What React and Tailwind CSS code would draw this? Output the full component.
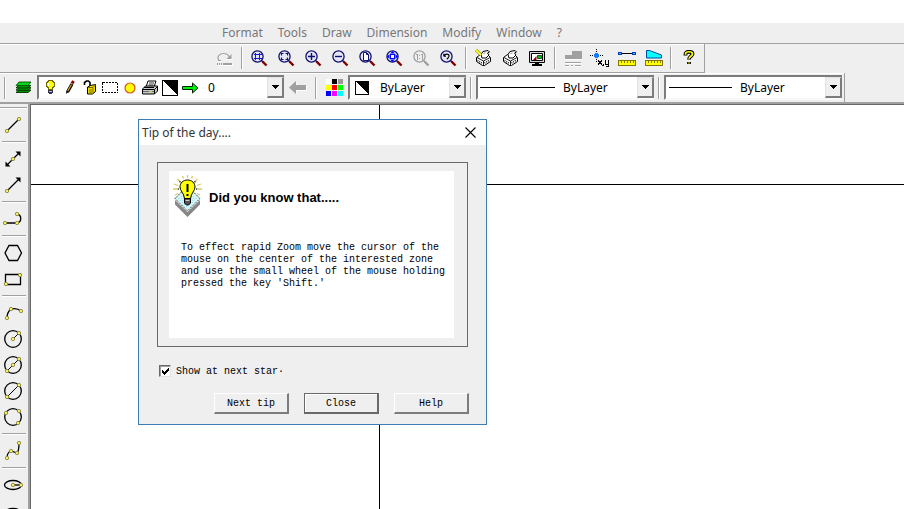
import React from "react";

const uiFont = 'font-["Noto_Sans",sans-serif]';
const monoFont = 'font-["Liberation_Mono",monospace]';

function Svg({ w, h, children, smooth = false }) {
  return (
    <svg
      width={w}
      height={h}
      viewBox={`0 0 ${w} ${h}`}
      fill="none"
      shapeRendering={smooth ? "auto" : "crispEdges"}
      className="block shrink-0"
      aria-hidden="true"
    >
      {children}
    </svg>
  );
}

/* ---------- zoom icons ---------- */

function Lens({ grey = false, children }) {
  return (
    <Svg w={17} h={17} smooth>
      <circle cx="6.5" cy="6.5" r="5.6" fill={grey ? "#efefef" : "#e4e6f4"} stroke={grey ? "#a0a0a0" : "#101070"} strokeWidth="1.3" />
      <path d="M10.5 10.5l2 2" stroke={grey ? "#a0a0a0" : "#101070"} strokeWidth="1.5" />
      <path d="M11.5 11.5l4 4" stroke={grey ? "#a0a0a0" : "#800000"} strokeWidth="2.4" />
      {children}
    </Svg>
  );
}

const ZoomRect = () => (
  <Lens>
    <path d="M4.5 3v7M8.5 3v7M3 4.5h8M2.5 8.5h8" stroke="#1818d0" shapeRendering="crispEdges" />
  </Lens>
);
const ZoomWindow = () => (
  <Lens>
    <path d="M3.5 5.5v-2h2M7.5 3.5h2v2M9.5 7.5v2h-2M5.5 9.5h-2v-2" stroke="#101070" strokeWidth="1.1" />
  </Lens>
);
const ZoomIn = () => (
  <Lens>
    <path d="M3 6.5h7M6.5 3v7" stroke="#101070" strokeWidth="1.4" />
  </Lens>
);
const ZoomOut = () => (
  <Lens>
    <path d="M3 6.5h7" stroke="#101070" strokeWidth="1.4" />
  </Lens>
);
const ZoomPage = () => (
  <Lens>
    <path d="M4.5 2.5h3l2 2v6h-5zM7.5 2.5v2h2" fill="#fff" stroke="#101070" />
  </Lens>
);
const ZoomExtents = () => (
  <Lens>
    <path d="M6.5 1l2.5 2.5H4zM6.5 12L9 9.5H4zM1 6.5L3.5 4v5zM12 6.5L9.500 4v5z" fill="#0000ff" />
    <rect x="4.5" y="4.5" width="4" height="4" fill="#fff" stroke="#0000ff" />
  </Lens>
);
const ZoomOne = () => (
  <Lens grey>
    <path d="M3 4.5h1.500v5M8 4.5h1.5v5M6 5h1M6 8h1" stroke="#a0a0a0" shapeRendering="crispEdges" />
  </Lens>
);
const ZoomPrevious = () => (
  <Lens>
    <path d="M3.8 6V3.8M3.6 6.2H6M4 6c1-2.5 5-2.5 5 0 0 1.5-1 2-2.200 3.2" stroke="#000" strokeWidth="1.1" />
  </Lens>
);

/* ---------- upper toolbar icons ---------- */

const Redo = () => (
  <Svg w={17} h={15} smooth>
    <path d="M3 10.5h3M3.5 10C.5 5 5.5 3 8.5 3.5c3 0 4.5 1.5 5 4M10 8.5h6V4" stroke="#fff" />
    <path d="M2 9.5h3M3 9.5C0 5 4.5 2.5 7.5 2.5c3.5 0 5 1.5 6 4" stroke="#a0a0a0" strokeWidth="1.2" />
    <path d="M15.5 3v5h-5z" fill="#a0a0a0" />
    <path d="M1 12h1v2H1zM3 12h1v2H3zM5 12h1v2H5zM7 12h9v2H7z" fill="#a0a0a0" />
    <path d="M2 14.5h14.5v-2" stroke="#fff" />
  </Svg>
);

function PrinterShape() {
  return (
    <>
      <path d="M1.5 8.500l4-3h7l3 3v4l-6 4h-2l-6-4z" fill="#fff" stroke="#000" />
      <path d="M2 8.5l6.500 3.5 6.5-3.5M8.500 12v4" stroke="#000" strokeWidth=".9" />
      <path d="M2.5 11.5l5 3M9.500 14l5-3" stroke="#333" strokeDasharray="1 1" strokeWidth="1.6" />
      <path d="M6 5.5l2-3 5-1 1.5 1.500-2 1 1.5 2-3 3H7z" fill="#fff" stroke="#000" />
      <path d="M8.5 4.5l2-.5" stroke="#777" strokeWidth=".8" />
    </>
  );
}
const PrintWizard = () => (
  <Svg w={17} h={18} smooth>
    <PrinterShape />
    <path d="M1 1l5 5" stroke="#777700" strokeWidth="3" />
    <path d="M1 1l5 5" stroke="#ffff30" strokeWidth="1.8" />
  </Svg>
);
const Print = () => (
  <Svg w={17} h={18} smooth>
    <PrinterShape />
  </Svg>
);
const Monitor = () => (
  <Svg w={17} h={15} smooth>
    <path d="M.5 .5h15v11H.5z" fill="#d8d8d8" stroke="#000" />
    <path d="M2.5 2.500h11v7h-11z" fill="#fff" stroke="#000" />
    <path d="M4 9l3.5-4v4z" fill="#900000" />
    <path d="M8.5 4.5h4v3h-4z" fill="#00c020" stroke="#003000" strokeWidth=".8" />
    <path d="M6 12h4v1H6zM3 13h10v2H3z" fill="#000" />
  </Svg>
);
const LineWeights = () => (
  <Svg w={18} h={17}>
    <path d="M8 1h10v8H1V5h7z" fill="#a0a0a0" />
    <path d="M1 12.5h16M1 15.5h4M7 15.5h2M11 15.5h6" stroke="#a0a0a0" />
    <path d="M1 13.5h16M1 16.5h4M7 16.5h2M11 16.5h6M1 9.5h17" stroke="#fff" />
  </Svg>
);
const Coordinates = () => (
  <Svg w={19} h={18}>
    <path d="M6.5 0v1M6.5 2v1M6.5 10v1M6.5 12v1M0 6.5h1M2 6.5h1M10 6.5h1M12 6.5h1" stroke="#000" />
    <path d="M5 4h3v1h1v3H8v1H5V8H4V5h1z" fill="#1080ff" />
    <path d="M8.5 11v1l3 3v1M11.5 11v1l-3 3v1M13.5 15v1l-1 1M15.5 11v4h3M18.5 11v6h-3" stroke="#000" />
  </Svg>
);
function RulerStrip() {
  return (
    <>
      <path d="M.5 10.5h17v5H.5z" fill="#ffff00" stroke="#807800" />
      <path d="M3.5 11v2M6.5 11v2M9.5 11v2M12.5 11v2M15.5 11v2" stroke="#807800" />
    </>
  );
}
const Distance = () => (
  <Svg w={18} h={16}>
    <path d="M3 3.5h12" stroke="#000" />
    <path d="M.5 2.5h3v2h-3zM14.5 2.5h3v2h-3z" fill="#50b0ff" stroke="#0040c0" />
    <RulerStrip />
  </Svg>
);
const Area = () => (
  <Svg w={18} h={16} smooth>
    <path d="M1.5 .5h3l12 4.5v3h-15z" fill="#00ffff" stroke="#0048a0" />
    <g shapeRendering="crispEdges">
      <RulerStrip />
    </g>
  </Svg>
);
const HelpMark = () => (
  <Svg w={12} h={16} smooth>
    <path d="M2.5 5.5V4c0-3 7-3 7 0 0 2-3.5 2.5-3.5 5.5M6 12v2" stroke="#000" strokeWidth="3.8" />
    <path d="M2.5 4.8V4c0-3 7-3 7 0 0 2-3.5 2.5-3.5 4.8M6 12.6v1" stroke="#ffff00" strokeWidth="1.7" />
  </Svg>
);

/* ---------- layer toolbar icons ---------- */

const Layers = () => (
  <Svg w={17} h={13} smooth>
    <path d="M1 11.5L4 9h12l-3 2.5z" fill="#009000" stroke="#003000" strokeWidth=".9" />
    <path d="M1 9.2l3-2.5h12l-3 2.500z" fill="#00a000" stroke="#003000" strokeWidth=".9" />
    <path d="M1 6.900l3-2.5h12l-3 2.500z" fill="#00a000" stroke="#003000" strokeWidth=".9" />
    <path d="M1 4.6L4 1h12l-3 3.6z" fill="#00d818" stroke="#005000" strokeWidth=".9" />
  </Svg>
);
const Bulb = () => (
  <Svg w={11} h={15}>
    <path d="M3.5 .5h4v1h1v1h1v4h-1v1h-1v2h-4v-2h-1v-1h-1v-4h1v-1h1z" fill="#ffff00" stroke="#706800" />
    <path d="M3 10h5v3H7v1H4v-1H3z" fill="#303050" />
    <path d="M4 11.5h3" stroke="#bbb" />
    <path d="M3.5 3v3" stroke="#fff" />
  </Svg>
);
const Pencil = () => (
  <Svg w={11} h={15} smooth>
    <path d="M2.5 12l4.5-8" stroke="#000" strokeWidth="3.2" />
    <path d="M2.8 11L6.5 4.5" stroke="#c89818" strokeWidth="1.4" />
    <path d="M7 3.5l1.5-2.5" stroke="#900000" strokeWidth="3" />
    <path d="M.8 14l.7-3 2 1z" fill="#000" />
  </Svg>
);
const Lock = () => (
  <Svg w={14} h={15} smooth>
    <path d="M1.5 5V2.5l2-1.500h2l1.5 1.500V7" stroke="#000" strokeWidth="1.6" />
    <path d="M4.5 7l3-1.5 5-1v7l-3 2.5h-5z" fill="#f0e000" stroke="#000" />
    <path d="M5 7.5h5l2.5-2.5M10 7.5V14M6 10h3M6 12h3" stroke="#806800" />
  </Svg>
);
const DashedBox = () => (
  <Svg w={16} h={11}>
    <path d="M.5 .5h15v10H.5z" fill="#fff" stroke="#000" strokeDasharray="2 1" />
  </Svg>
);
const Sun = () => (
  <Svg w={12} h={12} smooth>
    <circle cx="6" cy="6" r="5" fill="#ffff00" stroke="#d85020" strokeWidth="1.2" />
  </Svg>
);
const Printer = () => (
  <Svg w={17} h={15} smooth>
    <path d="M4 7l2-6h8l-2 6z" fill="#fff" stroke="#000" />
    <path d="M7 3h5M6.5 5h5" stroke="#000" strokeWidth=".8" />
    <path d="M.5 9l3-3h12v5l-3 3H.5z" fill="#c8c8c8" stroke="#000" />
    <path d="M.5 9.5h12l3-3M12.5 9.5V14M2 7.5h10" stroke="#000" />
    <path d="M1 11.5h11" stroke="#707070" />
    <path d="M7 11.5h3" stroke="#e0d000" />
  </Svg>
);
const HalfSquare = ({ size }) => (
  <Svg w={size} h={size}>
    <path d={`M.5 .5h${size - 1}v${size - 1}H.5z`} fill="#fff" stroke="#000" />
    <path d={`M1 1h${size - 1}v${size - 1}z`} fill="#000" />
  </Svg>
);
const GreenArrow = () => (
  <Svg w={17} h={12} smooth>
    <path d="M.5 4.500h10v-3.500l5.500 5-5.500 5V7.5H.5z" fill="#00f000" stroke="#002800" />
  </Svg>
);
const BackArrow = () => (
  <Svg w={18} h={13} smooth>
    <path d="M8 2v3h10v5H8v3L2 7z" fill="#fff" />
    <path d="M7 0v4h10v5H7v4L0 6.5z" fill="#a0a0a0" />
  </Svg>
);
const Palette = () => (
  <Svg w={17} h={17}>
    <path d="M0 0h5v5H0z" fill="#fff" />
    <path d="M6 0h5v5H6z" fill="#000" />
    <path d="M12 0h5v5h-5z" fill="#999" />
    <path d="M0 6h5v5H0z" fill="#ffff00" />
    <path d="M6 6h5v5H6z" fill="#ff0000" />
    <path d="M12 6h5v5h-5z" fill="#00ff00" />
    <path d="M0 12h5v5H0z" fill="#0000ff" />
    <path d="M6 12h5v5H6z" fill="#ff00ff" />
    <path d="M12 12h5v5h-5z" fill="#00ffff" />
  </Svg>
);

/* ---------- drawing tools ---------- */

function Tool({ dots = [], children }) {
  return (
    <Svg w={20} h={20} smooth>
      <g stroke="#000" strokeWidth="1.3">{children}</g>
      {dots.map(([x, y]) => (
        <circle key={`${x}-${y}`} cx={x} cy={y} r="1.7" fill="#f4f060" stroke="#8a8440" strokeWidth=".9" />
      ))}
    </Svg>
  );
}

const drawTools = [
  [["Line", <Tool dots={[[4, 16], [16, 4]]}><path d="M4 16L16 4" /></Tool>]],
  [
    [
      "Construction line",
      <Tool dots={[[10, 10]]}>
        <path d="M4 16L16 4" />
        <path d="M2.5 17.5v-5l5 5zM17.5 2.5h-5l5 5z" fill="#000" stroke="none" />
      </Tool>,
    ],
    [
      "Ray",
      <Tool dots={[[4, 16]]}>
        <path d="M4 16L16 4" />
        <path d="M17.5 2.5h-5l5 5z" fill="#000" stroke="none" />
      </Tool>,
    ],
  ],
  [["Polyline", <Tool dots={[[2, 14], [14, 14], [14, 5]]}><path d="M2 14h12c5-1 5-8 0-9" /></Tool>]],
  [
    ["Polygon", <Tool><path d="M6 2.5h8.5l4 7.500-4 7.5H6L2 10z" /></Tool>],
    ["Rectangle", <Tool dots={[[3, 15], [17, 6]]}><path d="M2.5 5.5h15v10h-15z" /></Tool>],
  ],
  [
    ["Arc", <Tool dots={[[4, 15], [8, 6], [18, 8]]}><path d="M4 15c0-4 1.5-7 4-9 4-1 7-.5 10 2" /></Tool>],
    ["Circle radius", <Tool dots={[[10, 10], [16, 4]]}><circle cx="10" cy="10" r="8.3" /><path d="M10 10l6-6" strokeWidth="1" /></Tool>],
    ["Circle diameter", <Tool dots={[[4, 16], [10, 10], [16, 4]]}><circle cx="10" cy="10" r="8.3" /><path d="M4 16L16 4" strokeWidth="1" /></Tool>],
    ["Circle two points", <Tool dots={[[4, 16], [16, 4]]}><circle cx="10" cy="10" r="8.3" /><path d="M4 16L16 4" strokeWidth="1" /></Tool>],
    ["Circle three points", <Tool dots={[[3, 6], [16, 4], [15, 16]]}><circle cx="10" cy="10" r="8.3" /></Tool>],
  ],
  [["Spline", <Tool dots={[[4, 17], [8, 10], [14, 12], [16, 2]]}><path d="M4 17c0-4 1-6 4-7l6 2c2-2 2-6 2-10" /></Tool>]],
  [
    ["Ellipse", <Tool dots={[[10, 10], [18, 10]]}><ellipse cx="10" cy="10" rx="8.5" ry="4.5" /><path d="M10 10h8" /></Tool>],
    ["Ellipse arc", <Tool><ellipse cx="10" cy="12" rx="8.5" ry="4.5" /></Tool>],
  ],
];

/* ---------- dialog icon ---------- */

const TipIcon = () => (
  <Svg w={32} h={44} smooth>
    <path d="M2 25v4.5l12.5 12.5L27 29.5V25L14.500 37z" fill="#868686" />
    <path d="M2 23.5L14.5 11 27 23.5 14.5 36z" fill="#d4f4f8" stroke="#000" strokeWidth=".8" strokeDasharray="1.5 1" />
    <path d="M5 23.5h19M7 25.5h15M9 27.5h11M11 29.5h7M13 31.5h3M8 21.5h13" stroke="#7cdce8" strokeWidth=".8" strokeDasharray="1 1.5" />
    <path d="M14.5 0v3M4.5 4l3 3M24.500 4l-3 3M0 14h5M24 14h5M2 20l3-1.5M27 20l-3-1.5M9.500 1l1 2.5M19.5 1l-1 2.5M1 9l4 1.500M28 9l-4 1.5" stroke="#d8cc60" strokeWidth="1.3" />
    <path d="M6.5 6.2l1 1M22.5 6.2l-1 1M5 14h1M23 14h1" stroke="#333" strokeWidth="1.3" />
    <path d="M14.5 5C10 5 7 8 7 12c0 4 4 6 4.500 11.5h6C18 18 22 16 22 12c0-4-3-7-7.5-7z" fill="#ffff00" stroke="#000" />
    <path d="M14.5 9v8M14.5 19v2" stroke="#000" strokeWidth="2" />
    <path d="M11.500 23.500h6V28l-2 2h-2l-2-2z" fill="#555" stroke="#000" />
    <path d="M12.500 25.500h4" stroke="#ccc" />
  </Svg>
);

/* ---------- controls ---------- */

function IconButton({ label, children, className = "w-[27px]" }) {
  return (
    <button type="button" aria-label={label} className={`flex shrink-0 items-center justify-center ${className}`}>
      {children}
    </button>
  );
}

function Divider({ className = "w-2" }) {
  return (
    <div className={`flex shrink-0 justify-center ${className}`}>
      <div className="h-[22px] border-l border-[#a0a0a0] border-r border-r-white" />
    </div>
  );
}

function Combo({ label, value, className, children }) {
  return (
    <div
      className={`flex h-[25px] shrink-0 items-center border-t-2 border-b-2 border-l-2 border-t-[#7c7c7c] border-l-[#7c7c7c] border-b-[#f8f8f8] bg-white ${className}`}
    >
      {children}
      <select aria-label={label} className={`min-w-0 flex-1 appearance-none bg-transparent ${uiFont} text-xs text-black outline-none`}>
        <option>{value}</option>
      </select>
      <button
        type="button"
        aria-label={`Open ${label}`}
        className="flex h-full w-[17px] shrink-0 items-center justify-center border-r-2 border-b-2 border-l border-t border-t-[#e3e3e3] border-l-[#e3e3e3] border-r-[#7c7c7c] border-b-[#7c7c7c] bg-[#efefef]"
      >
        <Svg w={7} h={4}>
          <path d="M0 0h7v1H6v1H5v1H4v1H3V3H2V2H1V1H0z" fill="#000" />
        </Svg>
      </button>
    </div>
  );
}

function PushButton({ children, isDefault = false }) {
  return (
    <button
      type="button"
      className={`h-[21px] w-[75px] border-t border-l border-r-2 border-b-2 pt-[2px] ${monoFont} text-[10px] leading-3 ${
        isDefault ? "border-[#696969] inset-shadow-[1px_1px_0_#ffffff]" : "border-t-white border-l-white border-r-[#7c7c7c] border-b-[#7c7c7c]"
      } bg-[#efefef] text-black`}
    >
      {children}
    </button>
  );
}

function TipDialog() {
  return (
    <section
      role="dialog"
      aria-label="Tip of the day"
      className="absolute top-[14px] left-[107px] w-[349px] border border-[#3d7fb5] bg-[#efefef]"
    >
      <header className="flex h-[25px] items-center justify-between bg-white pr-[10px] pl-[3px]">
        <h1 className={`${uiFont} text-xs text-[#333]`}>Tip of the day....</h1>
        <button type="button" aria-label="Close dialog">
          <Svg w={11} h={11} smooth>
            <path d="M.5 .5l10 10M10.5 .5l-10 10" stroke="#000" strokeWidth="1.1" />
          </Svg>
        </button>
      </header>
      <div className="pt-[17px] pr-[17px] pb-[10px] pl-[18px]">
        <div className="mr-px border border-[#696969] py-2 pr-[13px] pl-[11px]">
          <div className="h-[167px] bg-white">
            <div className="flex items-start gap-1 pt-1 pl-1">
              <TipIcon />
              <h2 className='pt-[13px] font-["Liberation_Sans",sans-serif] text-[13px] font-bold text-black'>
                Did you know that.....
              </h2>
            </div>
            <p className={`${monoFont} pt-[23px] pl-3 text-[10px] leading-3 whitespace-pre text-black`}>
              {"To effect rapid Zoom move the cursor of the\nmouse on the center of the interested zone\nand use the small wheel of the mouse holding\npressed the key 'Shift.'"}
            </p>
          </div>
        </div>
        <label className="mt-[18px] flex items-start gap-[5px] pl-[2px]">
          <span className="grid size-3 shrink-0">
            <input
              type="checkbox"
              defaultChecked
              className="peer col-start-1 row-start-1 size-3 appearance-none border border-t-[#696969] border-l-[#696969] border-r-[#e3e3e3] border-b-[#e3e3e3] bg-white inset-shadow-[1px_1px_0_#a0a0a0]"
            />
            <span className="pointer-events-none invisible col-start-1 row-start-1 flex items-center justify-center peer-checked:visible">
              <Svg w={7} h={7}>
                <path d="M0 2h1v1h1v1h1V3h1V2h1V1h1V0h1v3H6v1H5v1H4v1H3v1H2V6H1V5H0z" fill="#000" />
              </Svg>
            </span>
          </span>
          <span className={`${monoFont} pt-px text-[10px] leading-3 whitespace-nowrap text-black`}>
            Show at next star·
          </span>
        </label>
        <div className="mt-[15px] flex justify-end gap-[15px]">
          <PushButton>Next tip</PushButton>
          <PushButton isDefault>Close</PushButton>
          <PushButton>Help</PushButton>
        </div>
      </div>
    </section>
  );
}

const menus = ["Format", "Tools", "Draw", "Dimension", "Modify", "Window", "?"];

export default function App() {
  return (
    <div className="flex h-screen flex-col overflow-hidden bg-[#efefef]">
      <div className="h-[23px] shrink-0 bg-white" />

      <nav className={`flex h-5 shrink-0 items-center gap-[15px] pl-[222px] ${uiFont} text-xs text-[#777]`}>
        {menus.map((m) => (
          <button key={m} type="button">
            {m}
          </button>
        ))}
      </nav>

      <div className="flex h-[30px] shrink-0 border-t border-[#a0a0a0]">
        <div className="flex items-center border-r border-b border-[#a0a0a0] pr-[2px] pl-[211px] inset-shadow-[0_1px_0_#ffffff]">
          <IconButton label="Redo"><Redo /></IconButton>
          <Divider />
          <IconButton label="Zoom rectangle"><ZoomRect /></IconButton>
          <IconButton label="Zoom window"><ZoomWindow /></IconButton>
          <IconButton label="Zoom in"><ZoomIn /></IconButton>
          <IconButton label="Zoom out"><ZoomOut /></IconButton>
          <IconButton label="Zoom page"><ZoomPage /></IconButton>
          <IconButton label="Zoom extents"><ZoomExtents /></IconButton>
          <IconButton label="Zoom one to one"><ZoomOne /></IconButton>
          <IconButton label="Zoom previous"><ZoomPrevious /></IconButton>
          <Divider />
          <IconButton label="Print wizard"><PrintWizard /></IconButton>
          <IconButton label="Print"><Print /></IconButton>
          <IconButton label="Display"><Monitor /></IconButton>
          <Divider />
          <IconButton label="Line weights"><LineWeights /></IconButton>
          <IconButton label="Coordinates"><Coordinates /></IconButton>
          <IconButton label="Distance"><Distance /></IconButton>
          <IconButton label="Area"><Area /></IconButton>
          <Divider />
          <IconButton label="Help"><HelpMark /></IconButton>
        </div>
      </div>

      <div className="flex h-[31px] shrink-0 border-b-2 border-[#a0a0a0]">
        <div className="flex items-center border-r border-[#a0a0a0] pr-[2px] inset-shadow-[0_1px_0_#ffffff]">
          <Divider className="w-[9px]" />
          <IconButton label="Layers" className="w-7"><Layers /></IconButton>
          <Combo label="Layer" value="0" className="w-[247px]">
            <div className="mr-2 grid grid-cols-8 items-center justify-items-center pl-px">
              <div className="flex w-5 justify-center"><Bulb /></div>
              <div className="flex w-5 justify-center"><Pencil /></div>
              <div className="flex w-5 justify-center"><Lock /></div>
              <div className="flex w-5 justify-center"><DashedBox /></div>
              <div className="flex w-5 justify-center"><Sun /></div>
              <div className="flex w-5 justify-center"><Printer /></div>
              <div className="flex w-5 justify-center"><HalfSquare size={16} /></div>
              <div className="flex w-5 justify-center"><GreenArrow /></div>
            </div>
          </Combo>
          <IconButton label="Previous layer" className="w-7"><BackArrow /></IconButton>
          <Divider />
          <IconButton label="Colours" className="w-7"><Palette /></IconButton>
          <Combo label="Colour" value="ByLayer" className="w-[118px]">
            <div className="pr-[11px] pl-[5px]"><HalfSquare size={14} /></div>
          </Combo>
          <Divider className="w-[10px]" />
          <Combo label="Line type" value="ByLayer" className="w-[178px]">
            <div className="mr-2 ml-[2px] h-px w-[75px] bg-black" />
          </Combo>
          <Divider className="w-[10px]" />
          <Combo label="Line weight" value="ByLayer" className="w-[178px]">
            <div className="mr-2 ml-[3px] h-px w-[63px] bg-black" />
          </Combo>
        </div>
      </div>

      <main className="flex min-h-0 flex-1 overflow-hidden">
        <aside className="w-[30px] shrink-0 overflow-hidden border-r-2 border-[#a0a0a0]">
          {drawTools.map((group, i) => (
            <div key={i}>
              <div className={`flex h-2 items-center ${i === 0 ? "pr-px" : "px-[2px]"}`}>
                <div className="w-full border-t border-b border-[#a0a0a0] border-b-white" />
              </div>
              {group.map(([label, icon]) => (
                <button key={label} type="button" aria-label={label} className="flex h-[26px] w-[26px] items-center justify-center">
                  {icon}
                </button>
              ))}
            </div>
          ))}
        </aside>
        <div className="relative flex-1 overflow-hidden border-t border-l border-[#696969] bg-white">
          <div className="absolute top-[79px] left-0 h-px w-full bg-black" />
          <div className="absolute top-0 left-[348px] h-full w-px bg-black" />
          <TipDialog />
        </div>
      </main>
    </div>
  );
}
